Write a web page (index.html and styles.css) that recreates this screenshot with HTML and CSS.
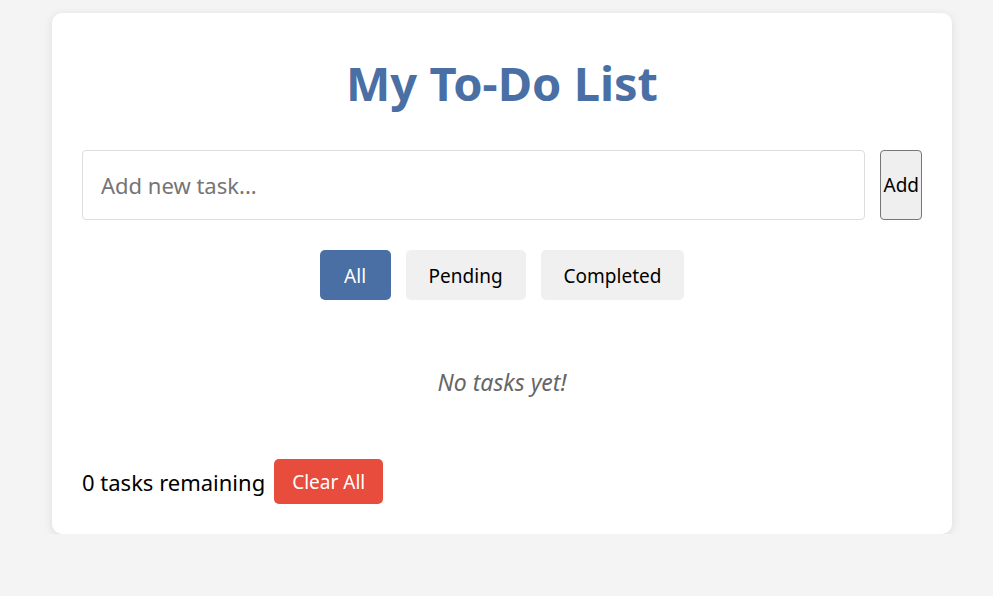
FILE: index.html
```html
<!DOCTYPE html>
<html lang="en">
<head>
<meta charset="utf-8">
<title>My To-Do List</title>
<link rel="stylesheet" href="styles.css">
</head>
<body>
<main class="card">
  <h1 class="title">My To-Do List</h1>
  <div class="add-row">
    <input class="task-input" type="text" placeholder="Add new task...">
    <button class="add-btn">Add</button>
  </div>
  <div class="filters">
    <button class="filter active">All</button>
    <button class="filter">Pending</button>
    <button class="filter">Completed</button>
  </div>
  <p class="empty">No tasks yet!</p>
  <div class="footer">
    <span class="remaining">0 tasks remaining</span>
    <button class="clear-btn">Clear All</button>
  </div>
</main>
</body>
</html>
```
FILE: styles.css
```css
* { box-sizing: border-box; }
html, body { margin: 0; padding: 0; }
body {
  background: #f4f4f4;
  font-family: "Noto Sans", "Open Sans", sans-serif;
  color: #000;
  padding: 13px 41px 0 52px;
}
.card {
  width: 900px;
  background: #fff;
  border-radius: 10px;
  box-shadow: 0 2px 10px rgba(0,0,0,0.1);
  padding: 30px;
}
.title {
  margin: 11px 0 38px;
  font-size: 47px;
  line-height: 58px;
  font-weight: 700;
  color: #4a6fa5;
  text-align: center;
}
.add-row {
  display: flex;
  gap: 15px;
  height: 70px;
}
.task-input {
  flex: 1;
  height: 70px;
  border: 1px solid #ddd;
  border-radius: 4px;
  padding: 0 18px;
  font-family: inherit;
  font-size: 22px;
  color: #333;
  outline: none;
}
.task-input::placeholder { color: #757575; }
.add-btn {
  height: 70px;
  padding: 0 2px;
  background: #efefef;
  border: 1px solid #767676;
  border-radius: 4px;
  font-family: inherit;
  font-size: 19px;
  color: #000;
}
.filters {
  display: flex;
  justify-content: center;
  gap: 15px;
  margin-top: 30px;
}
.filter {
  height: 50px;
  min-width: 71px;
  padding: 1px 23px 0;
  border: none;
  border-radius: 5px;
  background: #f0f0f0;
  font-family: inherit;
  font-size: 19px;
  color: #000;
}
.filter.active {
  background: #4a6fa5;
  color: #fff;
}
.empty {
  margin: 67px 0 62px;
  font-size: 23px;
  line-height: 30px;
  font-style: italic;
  color: #666;
  text-align: center;
}
.footer {
  display: flex;
  align-items: center;
  gap: 9px;
}
.remaining {
  font-size: 22px;
}
.clear-btn {
  height: 45px;
  padding: 0 18px;
  border: none;
  border-radius: 5px;
  background: #e74c3c;
  color: #fff;
  font-family: inherit;
  font-size: 19px;
}
```
